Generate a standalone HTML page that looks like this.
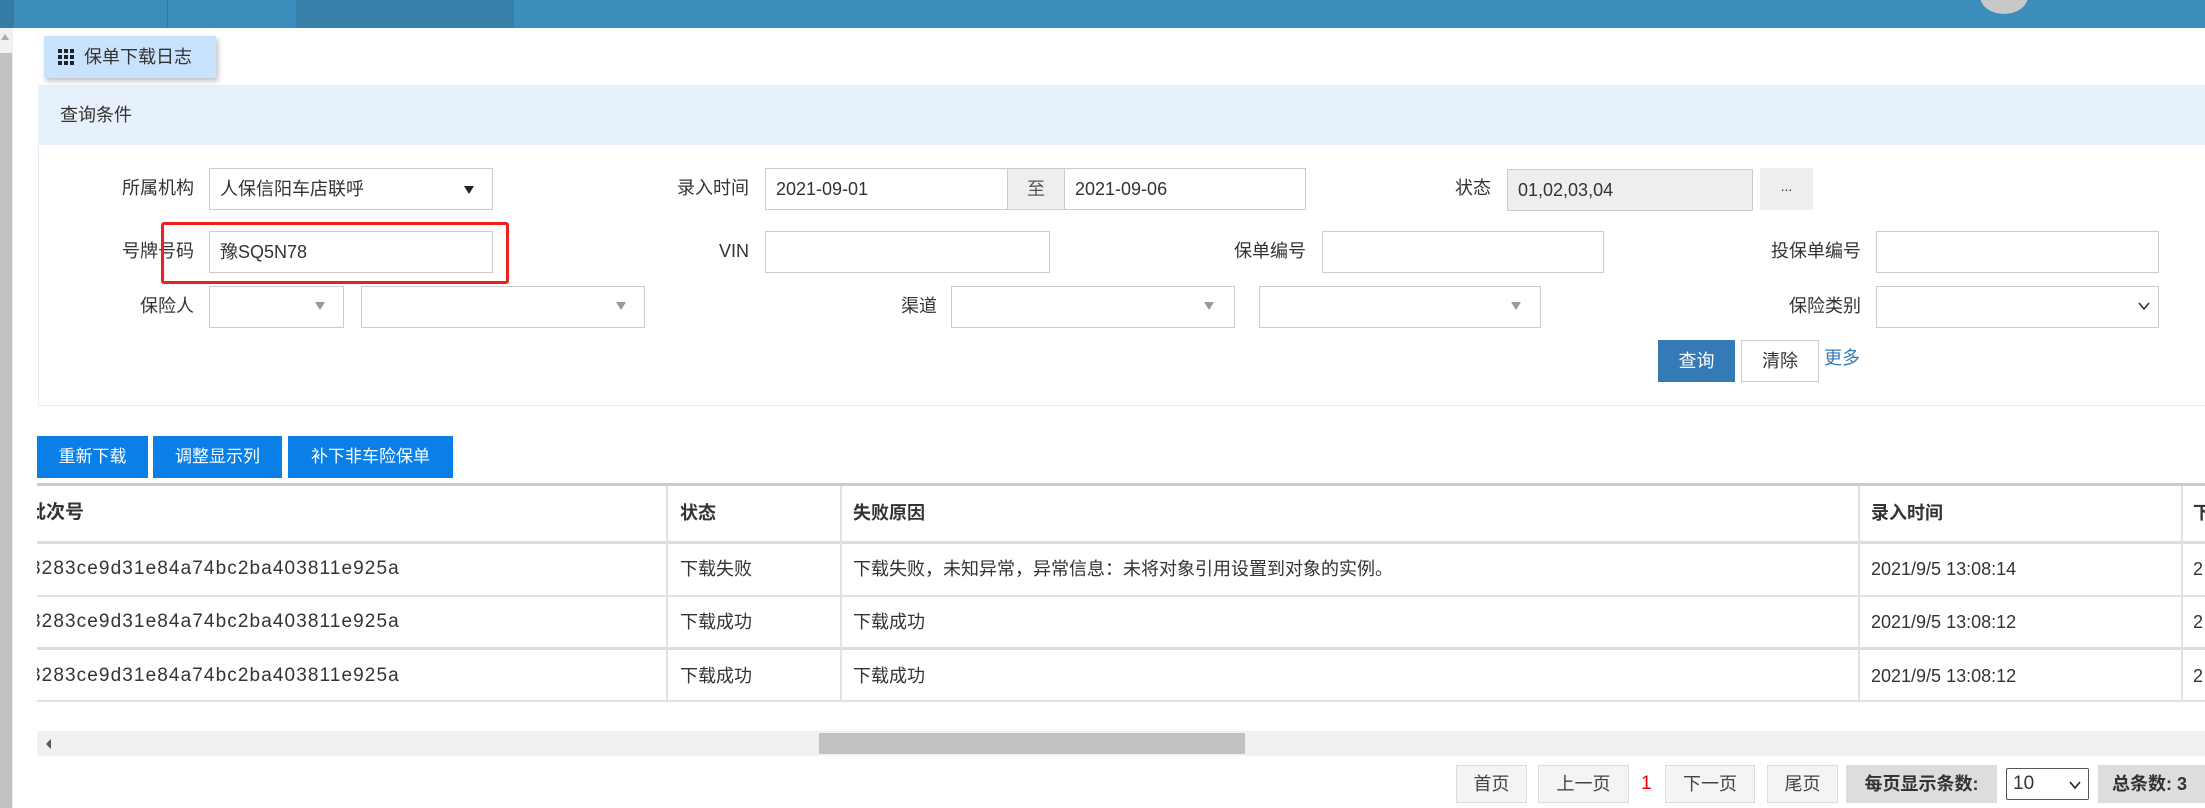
<!DOCTYPE html>
<html><head><meta charset="utf-8"><style>
*{box-sizing:border-box;margin:0;padding:0}
body{width:2205px;height:808px;position:relative;overflow:hidden;background:#fff;font-family:"Liberation Sans","Noto Sans CJK SC",sans-serif;color:#333;font-size:18px}
.a{position:absolute}
.lbl{position:absolute;text-align:right;font-size:18px;color:#333;line-height:41px}
.inp{position:absolute;border:1px solid #ccc;background:#fff;height:42px;font-size:18px;line-height:40px;padding-left:10px}
.tri{position:absolute;width:0;height:0;border-left:5px solid transparent;border-right:5px solid transparent;border-top:8px solid #999}
.btnb{position:absolute;background:#0a7fe6;color:#fff;font-size:17px;text-align:center;line-height:42px;height:42px}
.pg{position:absolute;top:765px;height:38px;border:1px solid #ddd;background:#f4f4f4;text-align:center;line-height:36px;font-size:18px;color:#444}
.td{position:absolute;font-size:18px;color:#333}
.hs{font-size:19px;letter-spacing:1.1px}
</style></head><body>
<div class="a" style="left:0;top:0;width:2205px;height:28px;background:#3b8dbc"></div>
<div class="a" style="left:0;top:0;width:14px;height:28px;background:#357ca5"></div>
<div class="a" style="left:167px;top:0;width:1px;height:28px;background:#357ca5"></div>
<div class="a" style="left:296px;top:0;width:218px;height:28px;background:#367fa9"></div>
<div class="a" style="left:1980px;top:-22px;width:48px;height:36px;border-radius:50%;background:#c8c8c8"></div>
<div class="a" style="left:0;top:28px;width:13px;height:780px;background:#f1f1f1"></div>
<div class="a" style="left:0;top:53px;width:12px;height:755px;background:#c1c1c1"></div>
<div class="a" style="left:1px;top:34px;width:0;height:0;border-left:4px solid transparent;border-right:4px solid transparent;border-bottom:6px solid #aaa"></div>

<div class="a" style="left:44px;top:36px;width:172px;height:42px;background:#c9e2fd;box-shadow:2px 3px 5px rgba(0,0,0,.25);font-size:18px;line-height:42px;padding-left:40px">保单下载日志</div>
<svg class="a" style="left:58px;top:49px" width="18" height="17"><g fill="#222"><rect x="0" y="0" width="4" height="4"/><rect x="6" y="0" width="4" height="4"/><rect x="12" y="0" width="4" height="4"/><rect x="0" y="6" width="4" height="4"/><rect x="6" y="6" width="4" height="4"/><rect x="12" y="6" width="4" height="4"/><rect x="0" y="12" width="4" height="4"/><rect x="6" y="12" width="4" height="4"/><rect x="12" y="12" width="4" height="4"/></g></svg>

<div class="a" style="left:38px;top:85px;width:2167px;height:321px;border:1px solid #e3ecf5;border-right:none"></div>
<div class="a" style="left:38px;top:86px;width:2167px;height:59px;background:#e7f1fb"></div>
<div class="a" style="left:60px;top:100px;font-size:18px;line-height:30px">查询条件</div>

<div class="lbl" style="left:80px;top:168px;width:114px">所属机构</div>
<div class="inp" style="left:209px;top:168px;width:284px">人保信阳车店联呼</div>
<div class="a" style="left:464px;top:186px;border-left:5px solid transparent;border-right:5px solid transparent;border-top:8px solid #222"></div>
<div class="lbl" style="left:600px;top:168px;width:149px">录入时间</div>
<div class="inp" style="left:765px;top:168px;width:243px">2021-09-01</div>
<div class="a" style="left:1007px;top:168px;width:58px;height:42px;background:#eee;border:1px solid #ccc;text-align:center;line-height:40px;color:#555">至</div>
<div class="inp" style="left:1064px;top:168px;width:242px">2021-09-06</div>
<div class="lbl" style="left:1400px;top:168px;width:91px">状态</div>
<div class="inp" style="left:1507px;top:169px;width:246px;background:#eee">01,02,03,04</div>
<div class="a" style="left:1760px;top:168px;width:53px;height:42px;background:#eee;text-align:center;line-height:36px;font-size:14px">...</div>

<div class="lbl" style="left:80px;top:231px;width:114px">号牌号码</div>
<div class="inp" style="left:209px;top:231px;width:284px">豫SQ5N78</div>
<div class="a" style="left:161px;top:222px;width:348px;height:62px;border:3px solid #f01e1e;border-radius:3px"></div>
<div class="lbl" style="left:600px;top:231px;width:149px">VIN</div>
<div class="inp" style="left:765px;top:231px;width:285px"></div>
<div class="lbl" style="left:1150px;top:231px;width:156px">保单编号</div>
<div class="inp" style="left:1322px;top:231px;width:282px"></div>
<div class="lbl" style="left:1700px;top:231px;width:161px">投保单编号</div>
<div class="inp" style="left:1876px;top:231px;width:283px"></div>

<div class="lbl" style="left:80px;top:286px;width:114px">保险人</div>
<div class="inp" style="left:209px;top:286px;width:135px"></div><div class="tri" style="left:315px;top:302px"></div>
<div class="inp" style="left:361px;top:286px;width:284px"></div><div class="tri" style="left:616px;top:302px"></div>
<div class="lbl" style="left:800px;top:286px;width:137px">渠道</div>
<div class="inp" style="left:951px;top:286px;width:284px"></div><div class="tri" style="left:1204px;top:302px"></div>
<div class="inp" style="left:1259px;top:286px;width:282px"></div><div class="tri" style="left:1511px;top:302px"></div>
<div class="lbl" style="left:1700px;top:286px;width:161px">保险类别</div>
<div class="inp" style="left:1876px;top:286px;width:283px"></div>
<svg class="a" style="left:2138px;top:301px" width="12" height="10"><path d="M1 2 L6 8 L11 2" stroke="#333" stroke-width="1.6" fill="none"/></svg>

<div class="a" style="left:1658px;top:340px;width:77px;height:42px;background:#337ab7;color:#fff;text-align:center;line-height:42px">查询</div>
<div class="a" style="left:1741px;top:340px;width:78px;height:42px;border:1px solid #ccc;text-align:center;line-height:40px">清除</div>
<div class="a" style="left:1824px;top:340px;line-height:36px;color:#337ab7">更多</div>

<div class="btnb" style="left:37px;top:436px;width:111px">重新下载</div>
<div class="btnb" style="left:153px;top:436px;width:129px">调整显示列</div>
<div class="btnb" style="left:288px;top:436px;width:165px">补下非车险保单</div>

<div class="a" style="left:37px;top:483px;width:2168px;height:3px;background:#ccc"></div>
<div class="a" style="left:37px;top:541px;width:2168px;height:3px;background:#ddd"></div>
<div class="a" style="left:37px;top:595px;width:2168px;height:2px;background:#e2e2e2"></div>
<div class="a" style="left:37px;top:647px;width:2168px;height:3px;background:#ddd"></div>
<div class="a" style="left:37px;top:700px;width:2168px;height:2px;background:#e2e2e2"></div>
<div class="a" style="left:666px;top:486px;width:2px;height:215px;background:#e2e2e2"></div>
<div class="a" style="left:840px;top:486px;width:2px;height:215px;background:#e2e2e2"></div>
<div class="a" style="left:1858px;top:486px;width:2px;height:215px;background:#e2e2e2"></div>
<div class="a" style="left:2181px;top:486px;width:2px;height:215px;background:#e2e2e2"></div>

<div class="a" style="left:37px;top:486px;width:620px;height:215px;overflow:hidden">
<div class="td" style="left:-10px;top:12px;font-weight:bold;line-height:30px;font-size:19px">批次号</div>
<div class="td hs" style="left:-7px;top:68px;line-height:30px">3283ce9d31e84a74bc2ba403811e925a</div>
<div class="td hs" style="left:-7px;top:121px;line-height:30px">3283ce9d31e84a74bc2ba403811e925a</div>
<div class="td hs" style="left:-7px;top:175px;line-height:30px">3283ce9d31e84a74bc2ba403811e925a</div>
</div>
<div class="td" style="left:680px;top:498px;font-weight:bold;line-height:30px">状态</div>
<div class="td" style="left:680px;top:554px;line-height:30px">下载失败</div>
<div class="td" style="left:680px;top:607px;line-height:30px">下载成功</div>
<div class="td" style="left:680px;top:661px;line-height:30px">下载成功</div>
<div class="td" style="left:853px;top:498px;font-weight:bold;line-height:30px">失败原因</div>
<div class="td" style="left:853px;top:554px;line-height:30px">下载失败，未知异常，异常信息：未将对象引用设置到对象的实例。</div>
<div class="td" style="left:853px;top:607px;line-height:30px">下载成功</div>
<div class="td" style="left:853px;top:661px;line-height:30px">下载成功</div>
<div class="td" style="left:1871px;top:498px;font-weight:bold;line-height:30px">录入时间</div>
<div class="td" style="left:1871px;top:554px;line-height:30px">2021/9/5 13:08:14</div>
<div class="td" style="left:1871px;top:607px;line-height:30px">2021/9/5 13:08:12</div>
<div class="td" style="left:1871px;top:661px;line-height:30px">2021/9/5 13:08:12</div>
<div class="td" style="left:2193px;top:498px;font-weight:bold;line-height:30px">下</div>
<div class="td" style="left:2193px;top:554px;line-height:30px">2</div>
<div class="td" style="left:2193px;top:607px;line-height:30px">2</div>
<div class="td" style="left:2193px;top:661px;line-height:30px">2</div>

<div class="a" style="left:37px;top:731px;width:2168px;height:25px;background:#f1f1f1"></div>
<div class="a" style="left:819px;top:733px;width:426px;height:21px;background:#c1c1c1"></div>
<div class="a" style="left:46px;top:739px;border-top:5px solid transparent;border-bottom:5px solid transparent;border-right:5px solid #555"></div>

<div class="pg" style="left:1456px;width:71px">首页</div>
<div class="pg" style="left:1538px;width:91px">上一页</div>
<div class="a" style="left:1641px;top:765px;line-height:38px;color:#e00;font-size:19px">1</div>
<div class="pg" style="left:1665px;width:90px">下一页</div>
<div class="pg" style="left:1767px;width:71px">尾页</div>
<div class="a" style="left:1846px;top:765px;width:151px;height:38px;background:#ddd;text-align:center;line-height:38px;font-weight:bold">每页显示条数:</div>
<div class="a" style="left:2006px;top:768px;width:83px;height:32px;border:1px solid #555;border-radius:2px;line-height:30px;padding-left:6px;font-size:19px">10</div>
<svg class="a" style="left:2069px;top:780px" width="12" height="10"><path d="M1 2 L6 8 L11 2" stroke="#222" stroke-width="1.6" fill="none"/></svg>
<div class="a" style="left:2098px;top:765px;width:107px;height:38px;background:#ddd;line-height:38px;padding-left:14px;font-weight:bold;white-space:nowrap">总条数: 3</div>
</body></html>
